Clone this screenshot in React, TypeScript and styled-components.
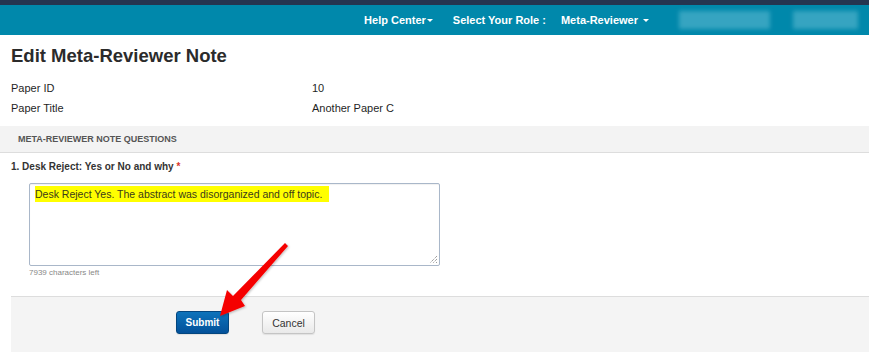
import styled, { createGlobalStyle } from "styled-components"

const GlobalStyle = createGlobalStyle`
    body {
        margin: 0;
        font-family: "Liberation Sans", Arial, sans-serif;
        color: #333;
        background: #fff;
    }
`

const Page = styled.div`
    position: relative;
    width: 869px;
    height: 352px;
    overflow: hidden;
`

const TopStrip = styled.div`
    height: 5px;
    background: #253550;
`

const NavBar = styled.div`
    height: 30px;
    background: #0088ab;
    display: flex;
    justify-content: flex-end;
    align-items: center;
    padding-right: 11px;
`

const NavItem = styled.div<{ $gap: number }>`
    display: flex;
    align-items: center;
    color: #fff;
    font-size: 11px;
    font-weight: bold;
    margin-right: ${(p) => p.$gap}px;
    white-space: nowrap;
`

const Caret = styled.span<{ $space?: boolean }>`
    display: inline-block;
    width: 0;
    height: 0;
    margin-left: ${(p) => (p.$space ? 5 : 1)}px;
    border-left: 3px solid transparent;
    border-right: 3px solid transparent;
    border-top: 3px solid #fff;
`

const Blurred = styled.div<{ $w: number; $gap: number }>`
    width: ${(p) => p.$w}px;
    height: 18px;
    margin-right: ${(p) => p.$gap}px;
    background: rgba(120, 200, 220, 0.45);
    filter: blur(2px);
`

const Main = styled.div`
    padding: 0 0 0 11px;
`

const Title = styled.h1`
    margin: 10px 0 0 0;
    font-size: 18.5px;
    line-height: 22px;
    font-weight: bold;
    color: #2b2b2b;
`

const InfoTable = styled.div`
    margin-top: 11px;
    display: grid;
    grid-template-columns: 301px 1fr;
    grid-auto-rows: 20px;
    align-items: center;
    font-size: 11px;
    color: #1f1f1f;
`

const SectionHeader = styled.div`
    margin: 8px 0 0 -11px;
    height: 26px;
    background: #f3f3f3;
    border-bottom: 1px solid #dddddd;
    display: flex;
    align-items: center;
    padding-left: 18px;
    font-size: 9px;
    font-weight: bold;
    color: #555;
    text-transform: uppercase;
`

const Question = styled.div`
    margin-top: 6px;
    font-size: 10px;
    line-height: 16px;
    font-weight: bold;
    color: #333;
`

const Required = styled.span`
    color: #d9342b;
`

const TextBox = styled.div`
    position: relative;
    box-sizing: border-box;
    margin: 8px 0 0 18px;
    width: 411px;
    height: 83px;
    border: 1px solid #a9b7c9;
    border-radius: 2px;
    box-shadow: inset 0 1px 1px rgba(0, 0, 0, 0.06);
    padding: 3px 5px;
    font-size: 10.5px;
    line-height: 15px;
    color: #3a3a1a;
`

const Highlight = styled.span`
    background: #ffff00;
    padding: 2px 7px 2px 0;
`

const Grip = styled.svg`
    position: absolute;
    right: 1px;
    bottom: 1px;
`

const Hint = styled.div`
    margin: 1px 0 0 18px;
    font-size: 8px;
    line-height: 12px;
    color: #888;
`

const Footer = styled.div`
    margin-top: 17px;
    height: 60px;
    background: #f4f4f4;
    border-top: 1px solid #dddddd;
    display: flex;
    align-items: flex-start;
    padding: 14px 0 0 165px;
    gap: 33px;
`

const Button = styled.button<{ $primary?: boolean }>`
    box-sizing: border-box;
    width: 53px;
    height: 23px;
    border-radius: 3px;
    font-family: "Liberation Sans", Arial, sans-serif;
    font-size: ${(p) => (p.$primary ? 10 : 10.5)}px;
    padding: 0;
    cursor: pointer;
    font-weight: ${(p) => (p.$primary ? "bold" : "normal")};
    color: ${(p) => (p.$primary ? "#fff" : "#333")};
    background: ${(p) =>
        p.$primary
            ? "linear-gradient(#0d73bb, #03519a)"
            : "linear-gradient(#ffffff, #e9e9e9)"};
    border: 1px solid ${(p) => (p.$primary ? "#03467f" : "#c4c4c4")};
    box-shadow: 0 1px 1px rgba(0, 0, 0, 0.08);
`

const Arrow = styled.svg`
    position: absolute;
    left: 0;
    top: 0;
    pointer-events: none;
`

const App = () => {
    return (
        <Page>
            <GlobalStyle />
            <TopStrip />
            <NavBar>
                <NavItem $gap={20}>Help Center<Caret /></NavItem>
                <NavItem $gap={15}>Select Your Role :</NavItem>
                <NavItem $gap={30}>Meta-Reviewer<Caret $space /></NavItem>
                <Blurred $w={91} $gap={23} />
                <Blurred $w={65} $gap={0} />
            </NavBar>
            <Main>
                <Title>Edit Meta-Reviewer Note</Title>
                <InfoTable>
                    <div>Paper ID</div>
                    <div>10</div>
                    <div>Paper Title</div>
                    <div>Another Paper C</div>
                </InfoTable>
                <SectionHeader>Meta-Reviewer Note Questions</SectionHeader>
                <Question>
                    1. Desk Reject: Yes or No and why <Required>*</Required>
                </Question>
                <TextBox>
                    <Highlight>Desk Reject Yes. The abstract was disorganized and off topic.</Highlight>
                    <Grip width="9" height="9" viewBox="0 0 9 9">
                        <path d="M8 1 L1 8 M8 4 L4 8 M8 7 L7 8" stroke="#777" strokeWidth="1" strokeDasharray="1 1" />
                    </Grip>
                </TextBox>
                <Hint>7939 characters left</Hint>
                <Footer>
                    <Button $primary>Submit</Button>
                    <Button>Cancel</Button>
                </Footer>
            </Main>
            <Arrow width="869" height="352" viewBox="0 0 869 352">
                <defs>
                    <filter id="arrowShadow" x="-20%" y="-20%" width="140%" height="140%">
                        <feDropShadow dx="1" dy="1" stdDeviation="1" floodColor="#000" floodOpacity="0.25" />
                    </filter>
                </defs>
                <polygon
                    points="285,243 288,246 241,300 245,306 220,316 227,290 233,296"
                    fill="#f50000"
                    filter="url(#arrowShadow)"
                />
            </Arrow>
        </Page>
    )
}

export default App
